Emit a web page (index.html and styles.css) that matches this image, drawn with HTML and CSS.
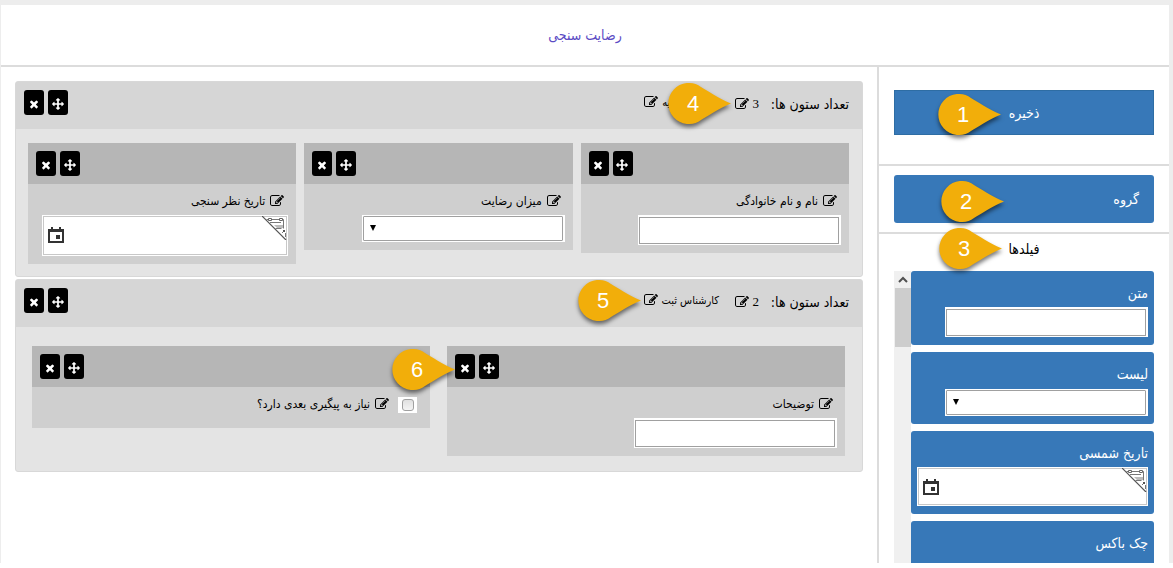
FILE: index.html
```html
<!DOCTYPE html>
<html lang="fa" dir="rtl">
<head>
<meta charset="utf-8">
<title>رضایت سنجی</title>
<link rel="stylesheet" href="styles.css">
</head>
<body>
<svg class="sprite" aria-hidden="true">
  <symbol id="times" viewBox="0 0 1792 1792"><path d="M1490 1322q0 40-28 68l-136 136q-28 28-68 28t-68-28l-294-294-294 294q-28 28-68 28t-68-28l-136-136q-28-28-28-68t28-68l294-294-294-294q-28-28-28-68t28-68l136-136q28-28 68-28t68 28l294 294 294-294q28-28 68-28t68 28l136 136q28 28 28 68t-28 68l-294 294 294 294q28 28 28 68z"/></symbol>
  <symbol id="move" viewBox="0 0 1792 1792"><path d="M1792 896q0 26-19 45l-256 256q-19 19-45 19t-45-19-19-45v-128h-384v384h128q26 0 45 19t19 45-19 45l-256 256q-19 19-45 19t-45-19l-256-256q-19-19-19-45t19-45 45-19h128v-384h-384v128q0 26-19 45t-45 19-45-19l-256-256q-19-19-19-45t19-45l256-256q19-19 45-19t45 19 19 45v128h384v-384h-128q-26 0-45-19t-19-45 19-45l256-256q19-19 45-19t45 19l256 256q19 19 19 45t-19 45-45 19h-128v384h384v-128q0-26 19-45t45-19 45 19l256 256q19 19 19 45z"/></symbol>
  <symbol id="edit" viewBox="0 0 1792 1792"><path d="M888 1184l116-116-152-152-116 116v56h96v96h56zm440-720q-16-16-33 1l-350 350q-17 17-1 33t33-1l350-350q17-17 1-33zm80 594v190q0 119-84.5 203.5t-203.5 84.5h-832q-119 0-203.5-84.5t-84.5-203.5v-832q0-119 84.5-203.5t203.5-84.5h832q63 0 117 25 15 7 18 23 3 17-9 29l-49 49q-14 14-32 8-23-6-45-6h-832q-66 0-113 47t-47 113v832q0 66 47 113t113 47h832q66 0 113-47t47-113v-126q0-13 9-22l64-64q15-15 35-7t20 29zm-96-738l288 288-672 672h-288v-288zm444 132l-92 92-288-288 92-92q28-28 68-28t68 28l152 152q28 28 28 68t-28 68z"/></symbol>
  <symbol id="calendar" viewBox="0 0 16 16"><path fill-rule="evenodd" d="M3 0h2v2h6V0h2v2h3v14H0V2h3zM2 5v9h12V5zM8 8h4v4H8z"/></symbol>
  <symbol id="corner" viewBox="0 0 25 24"><path d="M0 0l24 24" fill="none" stroke="#555" stroke-width="1.2"/><path d="M12 9h9v3h-6z" fill="#bbb"/><path d="M4.500 3.500h17v9M8 6.500h11M13.500 12.500h6M22 15l-2 2M23.500 17v4" fill="none" stroke="#777"/><path d="M6.500 2.500h3v2h-3zM17.500 2.500h3v2h-3z" fill="#fff" stroke="#666"/><path d="M21 14h2v2h-2z" fill="#555"/></symbol>
  <symbol id="pin" viewBox="0 0 63 41"><path d="M63 20.5C50 26 40 33 33 37A20.5 20.5 0 1 1 33 4C40 8 50 15 63 20.5z"/></symbol>
</svg>
<div class="page">
  <header class="page-head"><h1>رضایت سنجی</h1></header>
  <div class="workspace">
    <aside class="sidebar">
      <section class="save-area">
        <button class="save" type="button">ذخیره<span class="pin pin-save"><svg><use href="#pin"/></svg><b>1</b></span></button>
      </section>
      <section class="group-area">
        <button class="add-group" type="button">گروه<span class="pin pin-group"><svg><use href="#pin"/></svg><b>2</b></span></button>
      </section>
      <section class="fields-area">
        <h2>فیلدها<span class="pin pin-fields"><svg><use href="#pin"/></svg><b>3</b></span></h2>
        <div class="palette">
          <div class="tools">
            <div class="tool"><label for="t1">متن</label><span class="box text-box"><input id="t1" type="text"></span></div>
            <div class="tool"><label for="t2">لیست</label><span class="box list-box"><select id="t2"><option></option></select></span></div>
            <div class="tool"><label for="t3">تاریخ شمسی</label><span class="box date-box"><input id="t3" type="text"><svg class="cal"><use href="#calendar"/></svg><svg class="corner"><use href="#corner"/></svg></span></div>
            <div class="tool"><label for="t4">چک باکس</label><span class="check"><input id="t4" type="checkbox"></span></div>
          </div>
          <div class="track"><svg class="up" viewBox="0 0 16 17"><path d="M4 11l4-4 4 4" fill="none" stroke="#505050" stroke-width="2"/></svg><div class="thumb"></div></div>
        </div>
      </section>
    </aside>
    <main class="canvas">
      <section class="group">
        <div class="group-head">
          <span class="count-label">تعداد ستون ها:</span>
          <span class="count">3<svg class="edit"><use href="#edit"/></svg></span>
          <span class="name">اطلاعات اولیه<svg class="edit"><use href="#edit"/></svg></span>
          <span class="actions"><button type="button" aria-label="جابجایی"><svg><use href="#move"/></svg></button><button type="button" aria-label="حذف"><svg><use href="#times"/></svg></button></span>
          <span class="pin pin-count"><svg><use href="#pin"/></svg><b>4</b></span>
        </div>
        <div class="columns three">
          <div class="column">
            <div class="column-head"><span class="actions"><button type="button" aria-label="جابجایی"><svg><use href="#move"/></svg></button><button type="button" aria-label="حذف"><svg><use href="#times"/></svg></button></span></div>
            <div class="field"><label for="f1"><svg class="edit"><use href="#edit"/></svg>نام و نام خانوادگی</label><span class="box text-box"><input id="f1" type="text"></span></div>
          </div>
          <div class="column">
            <div class="column-head"><span class="actions"><button type="button" aria-label="جابجایی"><svg><use href="#move"/></svg></button><button type="button" aria-label="حذف"><svg><use href="#times"/></svg></button></span></div>
            <div class="field"><label for="f2"><svg class="edit"><use href="#edit"/></svg>میزان رضایت</label><span class="box list-box"><select id="f2"><option></option></select></span></div>
          </div>
          <div class="column">
            <div class="column-head"><span class="actions"><button type="button" aria-label="جابجایی"><svg><use href="#move"/></svg></button><button type="button" aria-label="حذف"><svg><use href="#times"/></svg></button></span></div>
            <div class="field"><label for="f3"><svg class="edit"><use href="#edit"/></svg>تاریخ نظر سنجی</label><span class="box date-box"><input id="f3" type="text"><svg class="cal"><use href="#calendar"/></svg><svg class="corner"><use href="#corner"/></svg></span></div>
          </div>
        </div>
      </section>
      <section class="group">
        <div class="group-head">
          <span class="count-label">تعداد ستون ها:</span>
          <span class="count">2<svg class="edit"><use href="#edit"/></svg></span>
          <span class="name">کارشناس ثبت<svg class="edit"><use href="#edit"/></svg></span>
          <span class="actions"><button type="button" aria-label="جابجایی"><svg><use href="#move"/></svg></button><button type="button" aria-label="حذف"><svg><use href="#times"/></svg></button></span>
          <span class="pin pin-name"><svg><use href="#pin"/></svg><b>5</b></span>
        </div>
        <div class="columns two">
          <div class="column">
            <div class="column-head"><span class="actions"><button type="button" aria-label="جابجایی"><svg><use href="#move"/></svg></button><button type="button" aria-label="حذف"><svg><use href="#times"/></svg></button></span><span class="pin pin-remove"><svg><use href="#pin"/></svg><b>6</b></span></div>
            <div class="field"><label for="f4"><svg class="edit"><use href="#edit"/></svg>توضیحات</label><span class="box text-box"><input id="f4" type="text"></span></div>
          </div>
          <div class="column">
            <div class="column-head"><span class="actions"><button type="button" aria-label="جابجایی"><svg><use href="#move"/></svg></button><button type="button" aria-label="حذف"><svg><use href="#times"/></svg></button></span></div>
            <div class="field check-field"><span class="check"><input id="f5" type="checkbox"></span><label for="f5"><svg class="edit"><use href="#edit"/></svg>نیاز به پیگیری بعدی دارد؟</label></div>
          </div>
        </div>
      </section>
    </main>
  </div>
</div>
</body>
</html>
```
FILE: styles.css
```css
* { box-sizing: border-box; }
body {
  margin: 0;
  height: 100vh;
  padding-bottom: 5px;
  display: flex;
  background: #fff;
  color: #000;
  font-family: "DejaVu Sans Condensed", "DejaVu Sans", sans-serif;
  font-size: 12px;
  overflow: hidden;
}
h1, h2 { margin: 0; font-weight: 400; }
button, input, select { font: inherit; margin: 0; }
.sprite { position: absolute; width: 0; height: 0; }

.page {
  flex: 1;
  min-width: 0;
  display: flex;
  flex-direction: column;
  background: #fff;
  border: solid #ededed;
  border-width: 5px 4px 0 1px;
}
.page-head {
  flex: none;
  height: 62px;
  display: flex;
  align-items: center;
  justify-content: center;
  border-bottom: 2px solid #dcdcdc;
}
.page-head h1 { font-size: 14px; color: #5b4bc4; }
.workspace { flex: 1; min-height: 0; display: flex; }

.sidebar {
  flex: none;
  width: 292px;
  display: flex;
  flex-direction: column;
  border-left: 2px solid #dcdcdc;
}
.save-area { padding: 23px 15px 29px; border-bottom: 2px solid #dcdcdc; }
.group-area { padding: 9px 15px; border-bottom: 2px solid #dcdcdc; }
.save, .add-group {
  position: relative;
  display: block;
  width: 100%;
  border: 0;
  background: #3778b8;
  color: #fff;
  font-size: 14px;
}
.save { height: 45px; border: 1px solid #2e6da4; }
.add-group { height: 48px; padding: 0 15px; border-radius: 3px; text-align: right; }
.fields-area { flex: 1; min-height: 0; display: flex; flex-direction: column; padding: 0 15px; }
.fields-area h2 {
  position: relative;
  flex: none;
  height: 37px;
  line-height: 30px;
  font-size: 14px;
  text-align: center;
}
.palette { flex: 1; min-height: 0; display: flex; overflow: hidden; }
.tools { flex: 1; display: flex; flex-direction: column; gap: 7px; }
.tool {
  flex: none;
  display: flex;
  flex-direction: column;
  align-items: flex-start;
  padding: 8px 6px;
  border-radius: 3px;
  background: #3778b8;
  color: #fff;
  font-size: 14px;
}
.tool label { height: 28px; line-height: 28px; }
.tool .list-box { margin-top: 1px; }
.tool .check { margin-top: 8px; }
.track { flex: none; width: 17px; padding-left: 1px; background: #f0f0f0; }
.up { display: block; width: 16px; height: 17px; }
.thumb { height: 59px; background: #cdcdcd; }

.canvas { flex: 1; min-width: 0; padding: 14px; display: flex; flex-direction: column; gap: 2px; }
.group {
  flex: none;
  border: 1px solid #d8d8d8;
  border-radius: 3px;
  background: #e4e4e4;
}
.group-head {
  position: relative;
  height: 47px;
  display: flex;
  align-items: flex-start;
  padding: 8px 13px 0 8px;
  background: #d6d6d6;
  line-height: 28px;
}
.count-label { width: 90px; font-size: 14px; }
.count { width: 40px; font-family: "Liberation Serif", serif; font-size: 13px; }
.name { line-height: 26px; font-size: 11px; }
.actions { display: flex; gap: 4px; margin-right: auto; }
.actions button {
  width: 20px;
  height: 25px;
  padding: 3px 1px 0 0;
  display: flex;
  align-items: center;
  justify-content: center;
  border: 0;
  border-radius: 3px;
  background: #000;
}
.actions svg { width: 12px; height: 12px; fill: #fff; }
.edit { width: 14px; height: 14px; vertical-align: -3px; }
.count .edit, .name .edit { margin-right: 4px; }

.columns { display: flex; align-items: flex-start; }
.three { padding: 14px 13px 12px 12px; gap: 8px; }
.two { padding: 19px 17px 15px 16px; gap: 17px; }
.column { flex: 1; min-width: 0; background: #cfcfcf; }
.column-head { position: relative; display: flex; padding: 8px; height: 41px; background: #b6b6b6; }
.field { display: flex; flex-direction: column; align-items: flex-start; padding: 0 8px 8px; }
.field label { height: 31px; line-height: 34px; padding-right: 4px; }
.field label .edit { margin-left: 5px; }
.check-field { flex-direction: row; align-items: flex-start; padding: 0 13px 10px; gap: 5px; }

.box { display: flex; background: #fff; }
.text-box { padding: 2px 2px 1px 1px; }
.list-box { padding: 1px 2px 1px 1px; }
.box input, .box select { width: 200px; border: 1px solid #a0a0a0; background: #fff; padding: 0 6px; }
.text-box input { height: 27px; }
.list-box select {
  height: 25px;
  appearance: none;
  border-radius: 1px;
}
.list-box { position: relative; }
.list-box::after {
  content: "";
  position: absolute;
  left: 8px;
  top: 10px;
  border: solid transparent;
  border-width: 6px 3px 0;
  border-top-color: #000;
  pointer-events: none;
}
.date-box { position: relative; padding: 1px; align-self: stretch; }
.date-box input { width: 100%; height: 39px; border-color: #c8c8c8; }
.field .date-box { margin-left: 6px; }
.tool .date-box input { height: 37px; }
.date-box svg { position: absolute; }
.cal { left: 6px; top: 12px; width: 16px; height: 16px; fill: #333; }
.corner { right: 1px; top: 1px; width: 25px; height: 24px; }
.check { display: flex; padding: 2px 3px 2px 4px; background: #fff; }
.check-field .check { margin-top: 10px; }
.check input {
  appearance: none;
  width: 12px;
  height: 12px;
  border: 1px solid #a0a0a0;
  border-radius: 3px;
  background: linear-gradient(#e0e0e0, #f4f4f4);
}

.pin { position: absolute; width: 63px; height: 41px; z-index: 2; }
.pin svg { display: block; width: 63px; height: 41px; fill: #f2ae0a; filter: drop-shadow(0 3px 2px #0008); }
.pin b {
  position: absolute;
  inset: 0 auto 0 0;
  width: 50px;
  text-align: center;
  color: #fff;
  font: 400 22px/42px "Liberation Sans", sans-serif;
}
.pin-save { left: 43px; top: 3px; }
.pin-group { left: 47px; top: 6px; }
.pin-fields { left: 45px; top: -6px; }
.pin-count { right: 131px; top: 1px; }
.pin-name { right: 221px; top: 0; }
.pin-remove { left: -55px; top: 3px; }
```
